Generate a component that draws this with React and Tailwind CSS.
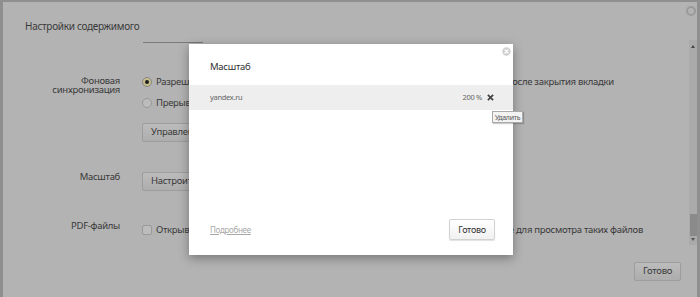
const FONT = "font-['Noto_Sans','Open_Sans',sans-serif]";

function Radio({ checked }) {
  return checked ? (
    <span className="flex items-center justify-center w-[10px] h-[10px] rounded-full border border-[#868686] bg-[#c6bd8c] shrink-0">
      <span className="w-[4px] h-[4px] rounded-full bg-[#1e1e1e]" />
    </span>
  ) : (
    <span className="w-[10px] h-[10px] rounded-full border border-[#999] bg-[#bcbcbc] shrink-0" />
  );
}

function DimButton({ children }) {
  return (
    <div className="h-[19px] px-[8px] flex items-center rounded-[2px] border border-[#9d9d9d] bg-gradient-to-b from-[#bcbcbc] to-[#adadad] text-[9.5px] text-[#3a3a3a] whitespace-nowrap">
      {children}
    </div>
  );
}

function CloseCircle() {
  return (
    <svg width="9" height="9" viewBox="0 0 9 9">
      <circle cx="4.5" cy="4.5" r="4.2" fill="#cfcfcf" />
      <path d="M3 3 L6 6 M6 3 L3 6" stroke="#fff" strokeWidth="1.2" strokeLinecap="round" />
    </svg>
  );
}

export default function App() {
  return (
    <div className={`relative w-[700px] h-[297px] overflow-hidden bg-[#b3b3b3] text-[#3a3a3a] tracking-[-0.3px] border-t-2 border-l-[3px] border-r-[3px] border-[#8f8f8f] ${FONT}`}>
      <div className="flex h-full">
        <div className="flex-1 flex flex-col">
          <div className="pt-[16px] pl-[22px] text-[10px] leading-[16px]">Настройки содержимого</div>
          <div className="mt-[8px] ml-[140px] w-[60px] h-px bg-[#7a7a7a]" />

          {/* Фоновая синхронизация */}
          <div className="mt-[32px] flex">
            <div className="w-[117px] text-right text-[9.5px] leading-[9px] pt-[1px]">
              Фоновая<br />синхронизация
            </div>
            <div className="ml-[22px] flex flex-col items-start">
              <div className="h-[14px] flex items-center gap-[4px] text-[9.5px] whitespace-nowrap">
                <Radio checked />
                <span>Разрешать недавно закрытым сайтам завершать отправку и получение данных после закрытия вкладки</span>
              </div>
              <div className="mt-[7px] h-[14px] flex items-center gap-[4px] text-[9.5px] whitespace-nowrap">
                <Radio />
                <span>Прерывать передачу данных при закрытии вкладки</span>
              </div>
              <div className="mt-[13px]">
                <DimButton>Управление исключениями</DimButton>
              </div>
            </div>
          </div>

          {/* Масштаб */}
          <div className="mt-[30px] flex items-start">
            <div className="w-[117px] text-right text-[9.5px] leading-[12px] -mt-[1px]">Масштаб</div>
            <div className="ml-[22px]">
              <DimButton>Настроить</DimButton>
            </div>
          </div>

          {/* PDF */}
          <div className="mt-[29px] flex items-start">
            <div className="w-[117px] text-right text-[9.5px] leading-[12px]">PDF-файлы</div>
            <div className="ml-[22px] mt-[3px] h-[14px] flex items-center gap-[4px] text-[9.5px] whitespace-nowrap">
              <span className="w-[10px] h-[10px] rounded-[2px] border border-[#999] bg-[#bcbcbc] shrink-0" />
              <span>Открывать PDF-файлы в браузере, даже если установлено стороннее приложение для просмотра таких файлов</span>
            </div>
          </div>

          <div className="mt-[25px] self-end mr-[8px]">
            <div className="h-[19px] w-[47px] flex items-center justify-center rounded-[2px] border border-[#9d9d9d] bg-gradient-to-b from-[#bcbcbc] to-[#adadad] text-[9.5px]">
              Готово
            </div>
          </div>
        </div>

        {/* scrollbar */}
        <div className="w-[8px] mt-[38px] h-[205px] bg-[#aaaaaa] flex flex-col items-center">
          <div className="mt-[5px] w-0 h-0 border-l-[2px] border-r-[2px] border-b-[3px] border-l-transparent border-r-transparent border-b-[#444]" />
          <div className="mt-auto w-[7px] h-[22px] bg-[#8a8a8a]" />
          <div className="mt-[2px] mb-[4px] w-0 h-0 border-l-[2px] border-r-[2px] border-t-[3px] border-l-transparent border-r-transparent border-t-[#555]" />
        </div>
      </div>

      {/* page close */}
      <div className="absolute top-[4px] right-[1px] w-[10px] h-[10px] rounded-full border-[2px] border-[#9a9a9a]" />

      {/* modal */}
      <div className="absolute left-[186px] top-[42px] w-[324px] h-[211px] bg-white shadow-[0_3px_10px_rgba(0,0,0,0.35)] flex flex-col">
        <div className="absolute top-[3px] right-[2px]">
          <CloseCircle />
        </div>
        <div className="pt-[15px] pl-[21px] text-[9.5px] leading-[16px] text-[#333]">Масштаб</div>
        <div className="mt-[10px] h-[25px] bg-[#eeeeee] flex items-center justify-between pl-[21px] pr-[19px] text-[7.5px] text-[#666]">
          <span>yandex.ru</span>
          <div className="flex items-center gap-[5px]">
            <span>200 %</span>
            <svg width="7" height="7" viewBox="0 0 8 8">
              <path d="M1 1 L7 7 M7 1 L1 7" stroke="#444" strokeWidth="2" />
            </svg>
          </div>
        </div>
        <div className="mt-auto pb-[15px] pl-[21px] pr-[18px] flex items-center justify-between">
          <span className="text-[8px] text-[#a8a8a8] underline">Подробнее</span>
          <div className="h-[21px] w-[46px] flex items-center justify-center rounded-[2px] border border-[#d2d2d2] bg-gradient-to-b from-white to-[#f1f1f1] shadow-[0_1px_1px_rgba(0,0,0,0.12)] text-[9px] text-[#333]">
            Готово
          </div>
        </div>
      </div>

      {/* tooltip */}
      <div className="absolute left-[489px] top-[109px] h-[12px] px-[2px] flex items-center border border-[#a9a9a9] bg-[#f3f3f3] text-[7px] leading-none text-[#555] shadow-[1px_1px_1px_rgba(0,0,0,0.2)]">
        Удалить
      </div>
    </div>
  );
}
